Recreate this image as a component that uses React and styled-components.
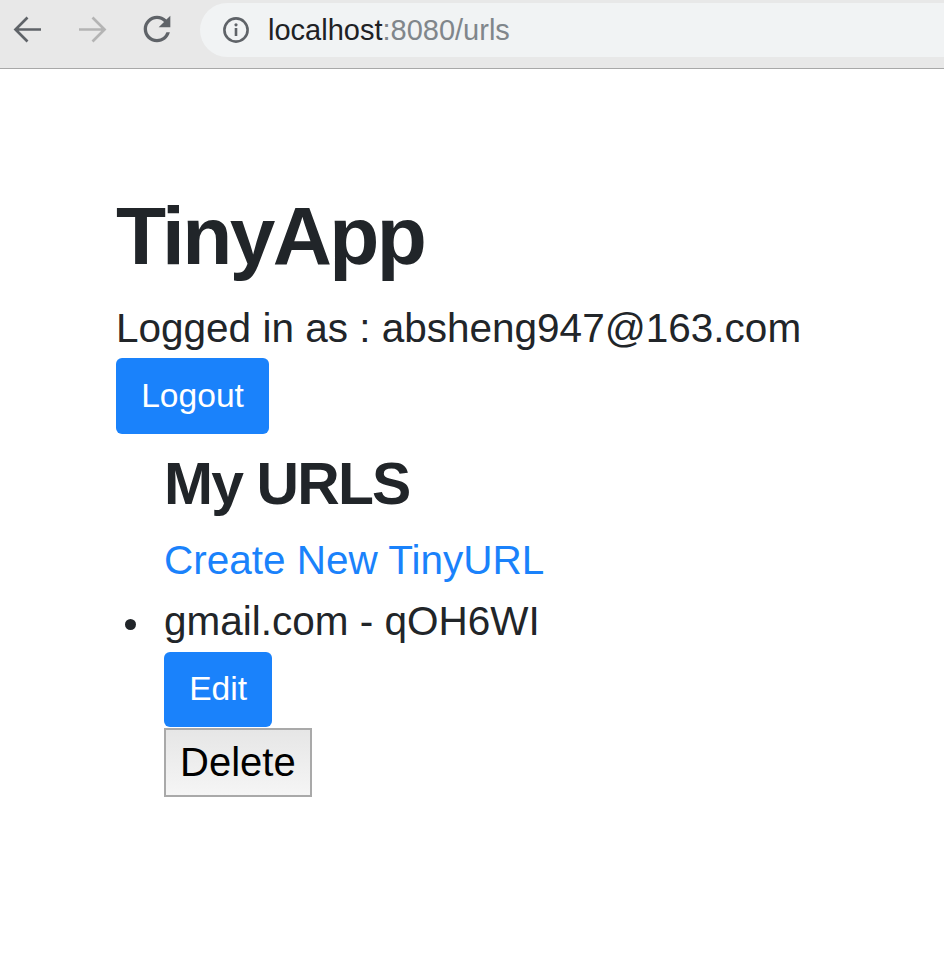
import React from "react";
import styled, { createGlobalStyle } from "styled-components";

const GlobalStyle = createGlobalStyle`
  html, body {
    margin: 0;
    padding: 0;
    background: #fff;
  }
  body {
    font-family: "Liberation Sans", Arial, sans-serif;
    color: #212529;
  }
`;

const ChromeBar = styled.div`
  height: 68px;
  background: #e8e8e8;
  border-bottom: 1px solid #a8a8a8;
  display: flex;
  align-items: flex-start;
  padding-left: 11.5px;
`;

const NavIcon = styled.div`
  width: 32px;
  height: 32px;
  margin: 13px 32.5px 0 0;
  display: flex;
  align-items: center;
  justify-content: center;
  svg {
    flex-shrink: 0;
  }
`;

const Omnibox = styled.div`
  flex: 1;
  height: 54px;
  margin: 3px 0 0 -5px;
  background: #f1f3f4;
  border-radius: 27px 0 0 27px;
  display: flex;
  align-items: center;
  padding-left: 23px;
  font-size: 29px;
  color: #202124;
  svg {
    flex-shrink: 0;
  }
`;

const Host = styled.span`
  margin-left: 19px;
`;

const Port = styled.span`
  color: #80868b;
`;

const Page = styled.main`
  padding: 0 0 0 116px;
`;

const Title = styled.h1`
  margin: 118px 0 0;
  font-size: 82px;
  font-weight: 700;
  letter-spacing: -2.6px;
  line-height: 98px;
`;

const Status = styled.div`
  margin-top: 18.6px;
  font-size: 40.5px;
  line-height: 48px;
`;

const Button = styled.button`
  display: block;
  font-family: inherit;
  font-size: 33.6px;
  line-height: 50.4px;
  padding: 12.6px 25.2px;
  border: none;
  border-radius: 6px;
  color: #fff;
  background: #1a82fb;
  margin-top: ${(p) => p.$top || 0}px;
  cursor: pointer;
`;

const PlainButton = styled.button`
  display: block;
  font-family: "Liberation Sans", Arial, sans-serif;
  font-size: 40px;
  line-height: 46px;
  padding: 9px 14px 10px;
  border: 2px solid #a9a9a9;
  background: linear-gradient(#e6e6e6, #f5f5f5);
  color: #000;
  margin-top: 1px;
`;

const UrlList = styled.ul`
  margin: 15.7px 0 0;
  padding-left: 48px;
  list-style: none;
  font-size: 40.5px;
  line-height: 48px;
`;

const Heading = styled.h3`
  margin: 0 0 16.6px;
  font-size: 58.8px;
  line-height: 70.6px;
  font-weight: 700;
  letter-spacing: -1.8px;
`;

const CreateLink = styled.a`
  display: block;
  color: #1a82fb;
  text-decoration: none;
`;

const Item = styled.li`
  position: relative;
  margin-top: 12.5px;
  &::before {
    content: "";
    position: absolute;
    left: -39px;
    top: 22px;
    width: 11px;
    height: 11px;
    border-radius: 50%;
    background: #212529;
  }
`;

const Arrow = ({ color, flip }) => (
  <svg width="32" height="32" viewBox="0 0 32 32" style={flip ? { transform: "scaleX(-1)" } : undefined}>
    <path
      d="M29 16.5H3.5M15.5 4.5L3.5 16.5l12 12"
      fill="none"
      stroke={color}
      strokeWidth="2.7"
      strokeLinecap="butt"
    />
  </svg>
);

const Reload = () => (
  <svg width="40" height="40" viewBox="0 0 24 24">
    <path
      d="M17.65 6.35A7.958 7.958 0 0 0 12 4c-4.42 0-7.99 3.58-7.99 8s3.57 8 7.99 8c3.73 0 6.84-2.55 7.73-6h-2.08A5.99 5.99 0 0 1 12 18c-3.31 0-6-2.69-6-6s2.69-6 6-6c1.66 0 3.14.69 4.22 1.78L13 11h7V4l-2.35 2.35z"
      fill="#5f6368"
    />
  </svg>
);

const Info = () => (
  <svg width="26" height="26" viewBox="0 0 26 26">
    <circle cx="13" cy="13" r="11.6" fill="none" stroke="#5f6368" strokeWidth="2.6" />
    <rect x="11.7" y="11" width="2.6" height="8" fill="#5f6368" />
    <circle cx="13" cy="7.8" r="1.6" fill="#5f6368" />
  </svg>
);

export default function App() {
  return (
    <>
      <GlobalStyle />
      <ChromeBar>
        <NavIcon>
          <Arrow color="#5f6368" />
        </NavIcon>
        <NavIcon>
          <Arrow color="#b4b4b4" flip />
        </NavIcon>
        <NavIcon>
          <Reload />
        </NavIcon>
        <Omnibox>
          <Info />
          <Host>
            localhost<Port>:8080/urls</Port>
          </Host>
        </Omnibox>
      </ChromeBar>
      <Page>
        <Title>TinyApp</Title>
        <Status>Logged in as : absheng947@163.com</Status>
        <Button $top={6.4}>Logout</Button>
        <UrlList>
          <Heading>My URLS</Heading>
          <CreateLink href="#">Create New TinyURL</CreateLink>
          <Item>
            gmail.com - qOH6WI
            <Button $top={6.7}>Edit</Button>
            <PlainButton>Delete</PlainButton>
          </Item>
        </UrlList>
      </Page>
    </>
  );
}
